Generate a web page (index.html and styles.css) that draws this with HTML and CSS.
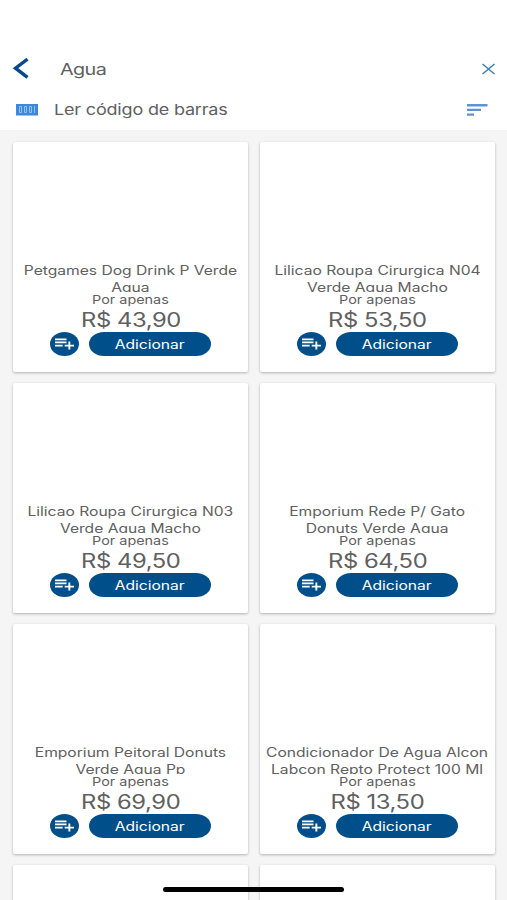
FILE: index.html
```html
<!DOCTYPE html>
<html lang="pt-BR">
<head>
  <meta charset="UTF-8" />
  <meta name="viewport" content="width=device-width, initial-scale=1.0" />
  <title>Agua</title>
  <link rel="stylesheet" href="styles.css">
</head>
<body>
  <header class="header">
    <div class="search-bar">
      <svg class="back" width="18" height="22" viewBox="0 0 18 22"><path d="M15.5 1.2 3.5 10.2 15.5 19.4" fill="none" stroke="#07498a" stroke-width="3.4"/></svg>
      <span class="query">Agua</span>
      <svg class="close" width="14" height="12" viewBox="0 0 14 12"><path d="M1.5 1 13.5 11M13.5 1 1.5 11" fill="none" stroke="#3478b5" stroke-width="1.3"/></svg>
    </div>
    <div class="tools">
      <svg class="barcode" width="22" height="12" viewBox="0 0 22 12">
        <path fill="#3d87dc" d="M0 0h22v11.5H0z"/>
        <path fill="none" stroke="#8fc2f5" d="M3.5 2.5h2v6h-2zM8.5 2.5h2v6h-2zM13.5 2.5h2v6h-2zM18.5 2v7"/>
      </svg>
      <span class="scan">Ler código de barras</span>
      <svg class="sort" width="21" height="12" viewBox="0 0 21 12"><path fill="#5b95d6" d="M0 0h20.5v2.4H0zM0 4.7h14v2.4H0zM0 9.4h7v2.4H0z"/></svg>
    </div>
  </header>

  <main class="products" id="products"></main>
  <div class="home-indicator"></div>

  <script>
    const products = [
      ["Petgames Dog Drink P Verde", "Agua", "43,90"],
      ["Lilicao Roupa Cirurgica N04", "Verde Agua Macho", "53,50"],
      ["Lilicao Roupa Cirurgica N03", "Verde Agua Macho", "49,50"],
      ["Emporium Rede P/ Gato", "Donuts Verde Agua", "64,50"],
      ["Emporium Peitoral Donuts", "Verde Agua Pp", "69,90"],
      ["Condicionador De Agua Alcon", "Labcon Repto Protect 100 Ml", "13,50"]
    ];

    const cards = products.map(([line1, line2, price]) => `
      <article class="card">
        <div class="name">${line1}<br>${line2}</div>
        <div class="label">Por apenas</div>
        <div class="price">R$ ${price}</div>
        <div class="actions">
          <button class="list-button" aria-label="Lista">
            <svg width="19" height="12" viewBox="0 0 19 12"><path fill="#fff" d="M0 .5h11.5v1.7H0zM0 3.6h11.5v1.7H0zM0 6.7h7.7v1.7H0zM13.4 3.6h1.9v3.1H19v1.7h-3.7v3.1h-1.9V8.4H9.7V6.7h3.7z"/></svg>
          </button>
          <button class="add-button"><span>Adicionar</span></button>
        </div>
      </article>`);

    // next row is still loading
    cards.push('<article class="card"></article>', '<article class="card"></article>');
    document.getElementById("products").innerHTML = cards.join("");
  </script>
</body>
</html>
```

FILE: styles.css
```css
* {
  box-sizing: border-box;
}

body {
  display: flex;
  flex-direction: column;
  margin: 0;
  height: 900px;
  overflow: hidden;
  background: #f5f5f5;
  color: #606060;
  font-family: Inter, "Liberation Sans", sans-serif;
}

svg {
  display: block;
}

.header {
  flex: none;
  height: 130px;
  padding-top: 48px;
  background: #fff;
}

.search-bar,
.tools {
  display: flex;
  align-items: center;
}

.search-bar {
  height: 41px;
  padding: 0 12px;
}

.tools {
  height: 41px;
  padding: 0 19px 0 16px;
}

.close,
.sort {
  margin-left: auto;
}

.query,
.scan {
  transform: scaleX(1.2);
  transform-origin: left;
  white-space: nowrap;
}

.query {
  margin-left: 30px;
  padding-top: 1px;
  font-size: 16.5px;
  letter-spacing: -0.5px;
}

.scan {
  margin-left: 16px;
  font-size: 15px;
  letter-spacing: -0.15px;
}

.products {
  flex: 1;
  min-height: 0;
  overflow: hidden;
  display: grid;
  grid-template-columns: 235px 235px;
  grid-auto-rows: 230px;
  gap: 11px 12px;
  padding: 12px 12px 0 13px;
}

.card {
  display: flex;
  flex-direction: column;
  align-items: center;
  padding-top: 120px;
  background: #fff;
  border-radius: 2px;
  box-shadow: 0 1px 3px rgba(0, 0, 0, 0.28);
}

/* wide lettering */
.name,
.label,
.price,
.add-button span {
  transform: scaleX(1.22);
  text-align: center;
  white-space: nowrap;
}

.name {
  height: 30px;
  overflow: hidden;
  font-size: 12.8px;
  line-height: 17px;
}

.label {
  height: 15px;
  font-size: 11.8px;
  line-height: 17px;
}

.price {
  height: 25px;
  padding-top: 1px;
  font-size: 19.5px;
  line-height: 25px;
  letter-spacing: -0.35px;
}

.actions {
  display: flex;
  gap: 10px;
}

button {
  display: flex;
  align-items: center;
  justify-content: center;
  height: 24px;
  padding: 0;
  border: none;
  background: #004f8b;
  color: #fff;
  font-family: inherit;
}

.list-button {
  width: 29px;
  border-radius: 50%;
}

.add-button {
  width: 122px;
  border-radius: 15px / 12px;
  font-size: 12.8px;
}

.home-indicator {
  position: absolute;
  left: 163px;
  top: 887px;
  width: 181px;
  height: 5px;
  border-radius: 3px;
  background: #000;
}
```
